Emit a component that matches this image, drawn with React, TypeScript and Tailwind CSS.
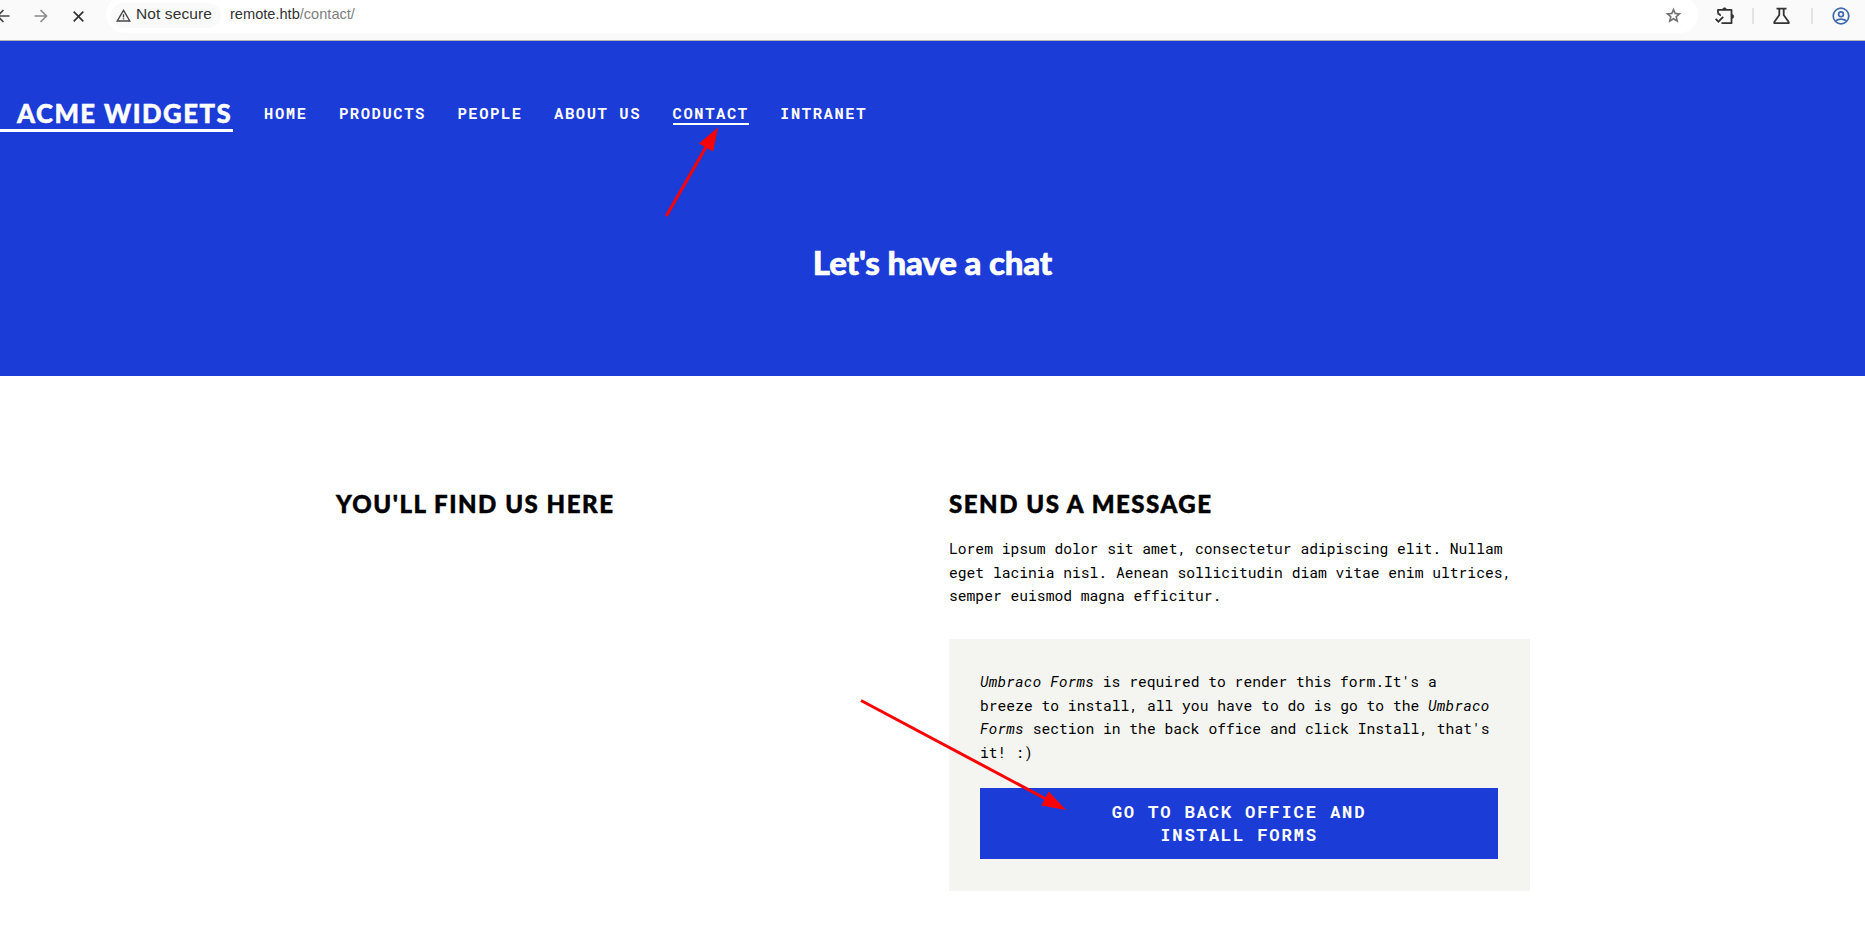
import type { ReactNode } from "react";

const mono = "font-['Roboto_Mono','Liberation_Mono',monospace]";

const links = [
  { label: "HOME" },
  { label: "PRODUCTS" },
  { label: "PEOPLE" },
  { label: "ABOUT US" },
  { label: "CONTACT", active: true },
  { label: "INTRANET" },
];

function MaterialIcon({ d, className }: { d: string; className: string }) {
  return (
    <svg viewBox="0 -960 960 960" fill="currentColor" className={className}>
      <path d={d} />
    </svg>
  );
}

function Toolbar() {
  return (
    <div className="flex h-[41px] items-start overflow-hidden border-b border-[#b4b4b4] bg-[#fafafa] font-['Liberation_Sans',sans-serif] text-[#333]">
      <svg className="mt-[9px] h-[14px] w-[10px] shrink-0 text-[#474747]" viewBox="0 0 10 14" fill="none" stroke="currentColor" strokeWidth="1.7">
        <path d="M9.500 7H-3M3.500 1L-2.500 7l6 6" />
      </svg>
      <svg className="mt-[9px] ml-[24px] h-[14px] w-[14px] shrink-0 text-[#8c8c8c]" viewBox="0 0 14 14" fill="none" stroke="currentColor" strokeWidth="1.7">
        <path d="M0.500 7H12M6.500 1l6 6-6 6" />
      </svg>
      <svg className="mt-[11px] ml-[25px] h-[11px] w-[11px] shrink-0 text-[#333]" viewBox="0 0 11 11" fill="none" stroke="currentColor" strokeWidth="1.7">
        <path d="M0.700 0.700l9.600 9.600M10.300 0.700L0.700 10.300" />
      </svg>
      <div className="-mt-[4px] ml-[22px] flex h-[37px] w-[1592px] shrink-0 rounded-full bg-white pl-[5px]">
        <div className="mt-[7px] flex h-[25px] w-[110px] rounded-full bg-[#fafafa] pl-[5px]">
          <svg className="mt-[6px] h-[13px] w-[15px] text-[#474747]" viewBox="0 0 15 13" fill="none" stroke="currentColor" strokeWidth="1.4">
            <path d="M7.500 1.300L1.200 12h12.600z" />
            <path d="M7.500 5.200v3.200M7.500 9.300v1.300" />
          </svg>
          <span className="ml-[5px] text-[15.5px] leading-[22px] tracking-[0.1px] whitespace-nowrap">Not secure</span>
        </div>
        <div className="mt-[7px] ml-[9px] text-[14.6px] leading-[22px] whitespace-nowrap">
          remote.htb<span className="text-[#808080]">/contact/</span>
        </div>
        <MaterialIcon
          className="mt-[10px] mr-[15.5px] ml-auto size-[19px] text-[#707070]"
          d="m354-287 126-76 126 77-33-144 111-96-146-13-58-136-58 135-146 13 111 97-33 143ZM233-120l65-281L80-590l288-25 112-265 112 265 288 25-218 189 65 281-247-149-247 149Zm247-350Z"
        />
      </div>
      <svg className="mt-[7px] ml-[17px] h-[18px] w-[20px] shrink-0 text-[#333]" viewBox="0 0 20 18" fill="none" stroke="currentColor" strokeWidth="1.8">
        <path d="M3 6V2.800h13.500v13.400H6.500" strokeLinejoin="round" />
        <path d="M7.500 2.500a2 1.800 0 0 1 4 0zM17 7.500a1.800 2 0 0 1 0 4z" fill="currentColor" strokeWidth="0.500" />
        <path d="M0.600 11.800l2.800 2.900L8.200 9.800M2.500 6.600c1.600 0 2.800 0.900 2.600 2.200" />
      </svg>
      <div className="mt-[8px] ml-[17px] h-[16px] w-[2px] bg-[#e3e3e3]" />
      <svg className="mt-[7px] ml-[19px] h-[18px] w-[17px] shrink-0 text-[#333]" viewBox="0 0 17 18" fill="none" stroke="currentColor" strokeWidth="1.800">
        <path d="M3.500 1.700h10M6.300 2v6L1.300 15v1.200h14.400V15l-5-7V2" strokeLinejoin="round" />
      </svg>
      <div className="mt-[8px] ml-[21px] h-[16px] w-[2px] bg-[#e3e3e3]" />
      <svg className="mt-[7px] ml-[18.5px] size-[18px] shrink-0 text-[#4169ae]" viewBox="0 0 18 18" fill="none" stroke="currentColor" strokeWidth="1.700">
        <circle cx="9" cy="9" r="7.800" />
        <circle cx="9" cy="7.200" r="2.400" />
        <path d="M3.500 14c3-2.600 8-2.600 11 0" />
      </svg>
    </div>
  );
}

function Heading({ children }: { children: ReactNode }) {
  return (
    <h2 className="text-[24px] leading-[32px] font-black tracking-[1.54px] whitespace-nowrap [-webkit-text-stroke:0.5px_currentColor]">
      {children}
    </h2>
  );
}

export default function App() {
  return (
    <div className="relative h-[950px] w-[1865px] overflow-hidden bg-white font-['Lato',sans-serif] text-black">
      <Toolbar />
      <header className="h-[335px] bg-[#1c3cd7] text-white">
        <div className="flex h-[91px] items-end">
          <div className="h-[36px] w-[233px] border-b-[3px] border-white pl-[17px] text-[25.7px] leading-[34px] font-black tracking-[1.5px] whitespace-nowrap [-webkit-text-stroke:0.5px_currentColor]">
            ACME WIDGETS
          </div>
          <nav className={`mb-[7px] ml-[31px] flex gap-[31.4px] text-[15.5px] leading-[23px] font-bold tracking-[1.58px] ${mono}`}>
            {links.map((l) => (
              <a key={l.label} className={`h-[23px] border-b-2 whitespace-nowrap ${l.active ? "border-white" : "border-transparent"}`}>
                {l.label}
              </a>
            ))}
          </nav>
        </div>
        <h1 className="pt-[109px] text-center text-[33px] leading-[42px] font-black tracking-[-0.15px] [-webkit-text-stroke:0.6px_currentColor]">
          Let's have a chat
        </h1>
      </header>
      <main className="grid grid-cols-[613px_581px] pt-[112px] pl-[336px]">
        <section>
          <Heading>YOU'LL FIND US HERE</Heading>
        </section>
        <section>
          <Heading>SEND US A MESSAGE</Heading>
          <p className={`mt-[17px] text-[14.65px] leading-[23.5px] whitespace-nowrap ${mono}`}>
            Lorem ipsum dolor sit amet, consectetur adipiscing elit. Nullam<br />
            eget lacinia nisl. Aenean sollicitudin diam vitae enim ultrices,<br />
            semper euismod magna efficitur.
          </p>
          <div className="mt-[31.5px] h-[252px] bg-[#f4f4f0] px-[31px] pt-[31.2px]">
            <p className={`h-[117.8px] text-[14.65px] leading-[23.6px] whitespace-nowrap ${mono}`}>
              <em className="tracking-[0.18px]">Umbraco Forms</em> is required to render this form.It's a<br />
              breeze to install, all you have to do is go to the <em className="tracking-[0.18px]">Umbraco</em><br />
              <em className="tracking-[0.18px]">Forms</em> section in the back office and click Install, that's<br />
              it! :)
            </p>
            <button className={`flex h-[71px] w-[518px] items-center justify-center bg-[#1c3cd7] text-center text-[17.3px] leading-[23px] font-bold tracking-[1.75px] text-white ${mono}`}>
              <span>
                GO TO BACK OFFICE AND<br />INSTALL FORMS
              </span>
            </button>
          </div>
        </section>
      </main>
      <svg className="pointer-events-none absolute inset-0" width="1865" height="950" viewBox="0 0 1865 950" fill="#ff0000" stroke="#ff0000">
        <path d="M666.300 216L706 147M861 700.500L1046 799" strokeWidth="3" />
        <path d="M718 127.500L699 143.500L713 151.500zM1066 810L1048.700 791.500L1041.300 805.500z" stroke="none" />
      </svg>
    </div>
  );
}
